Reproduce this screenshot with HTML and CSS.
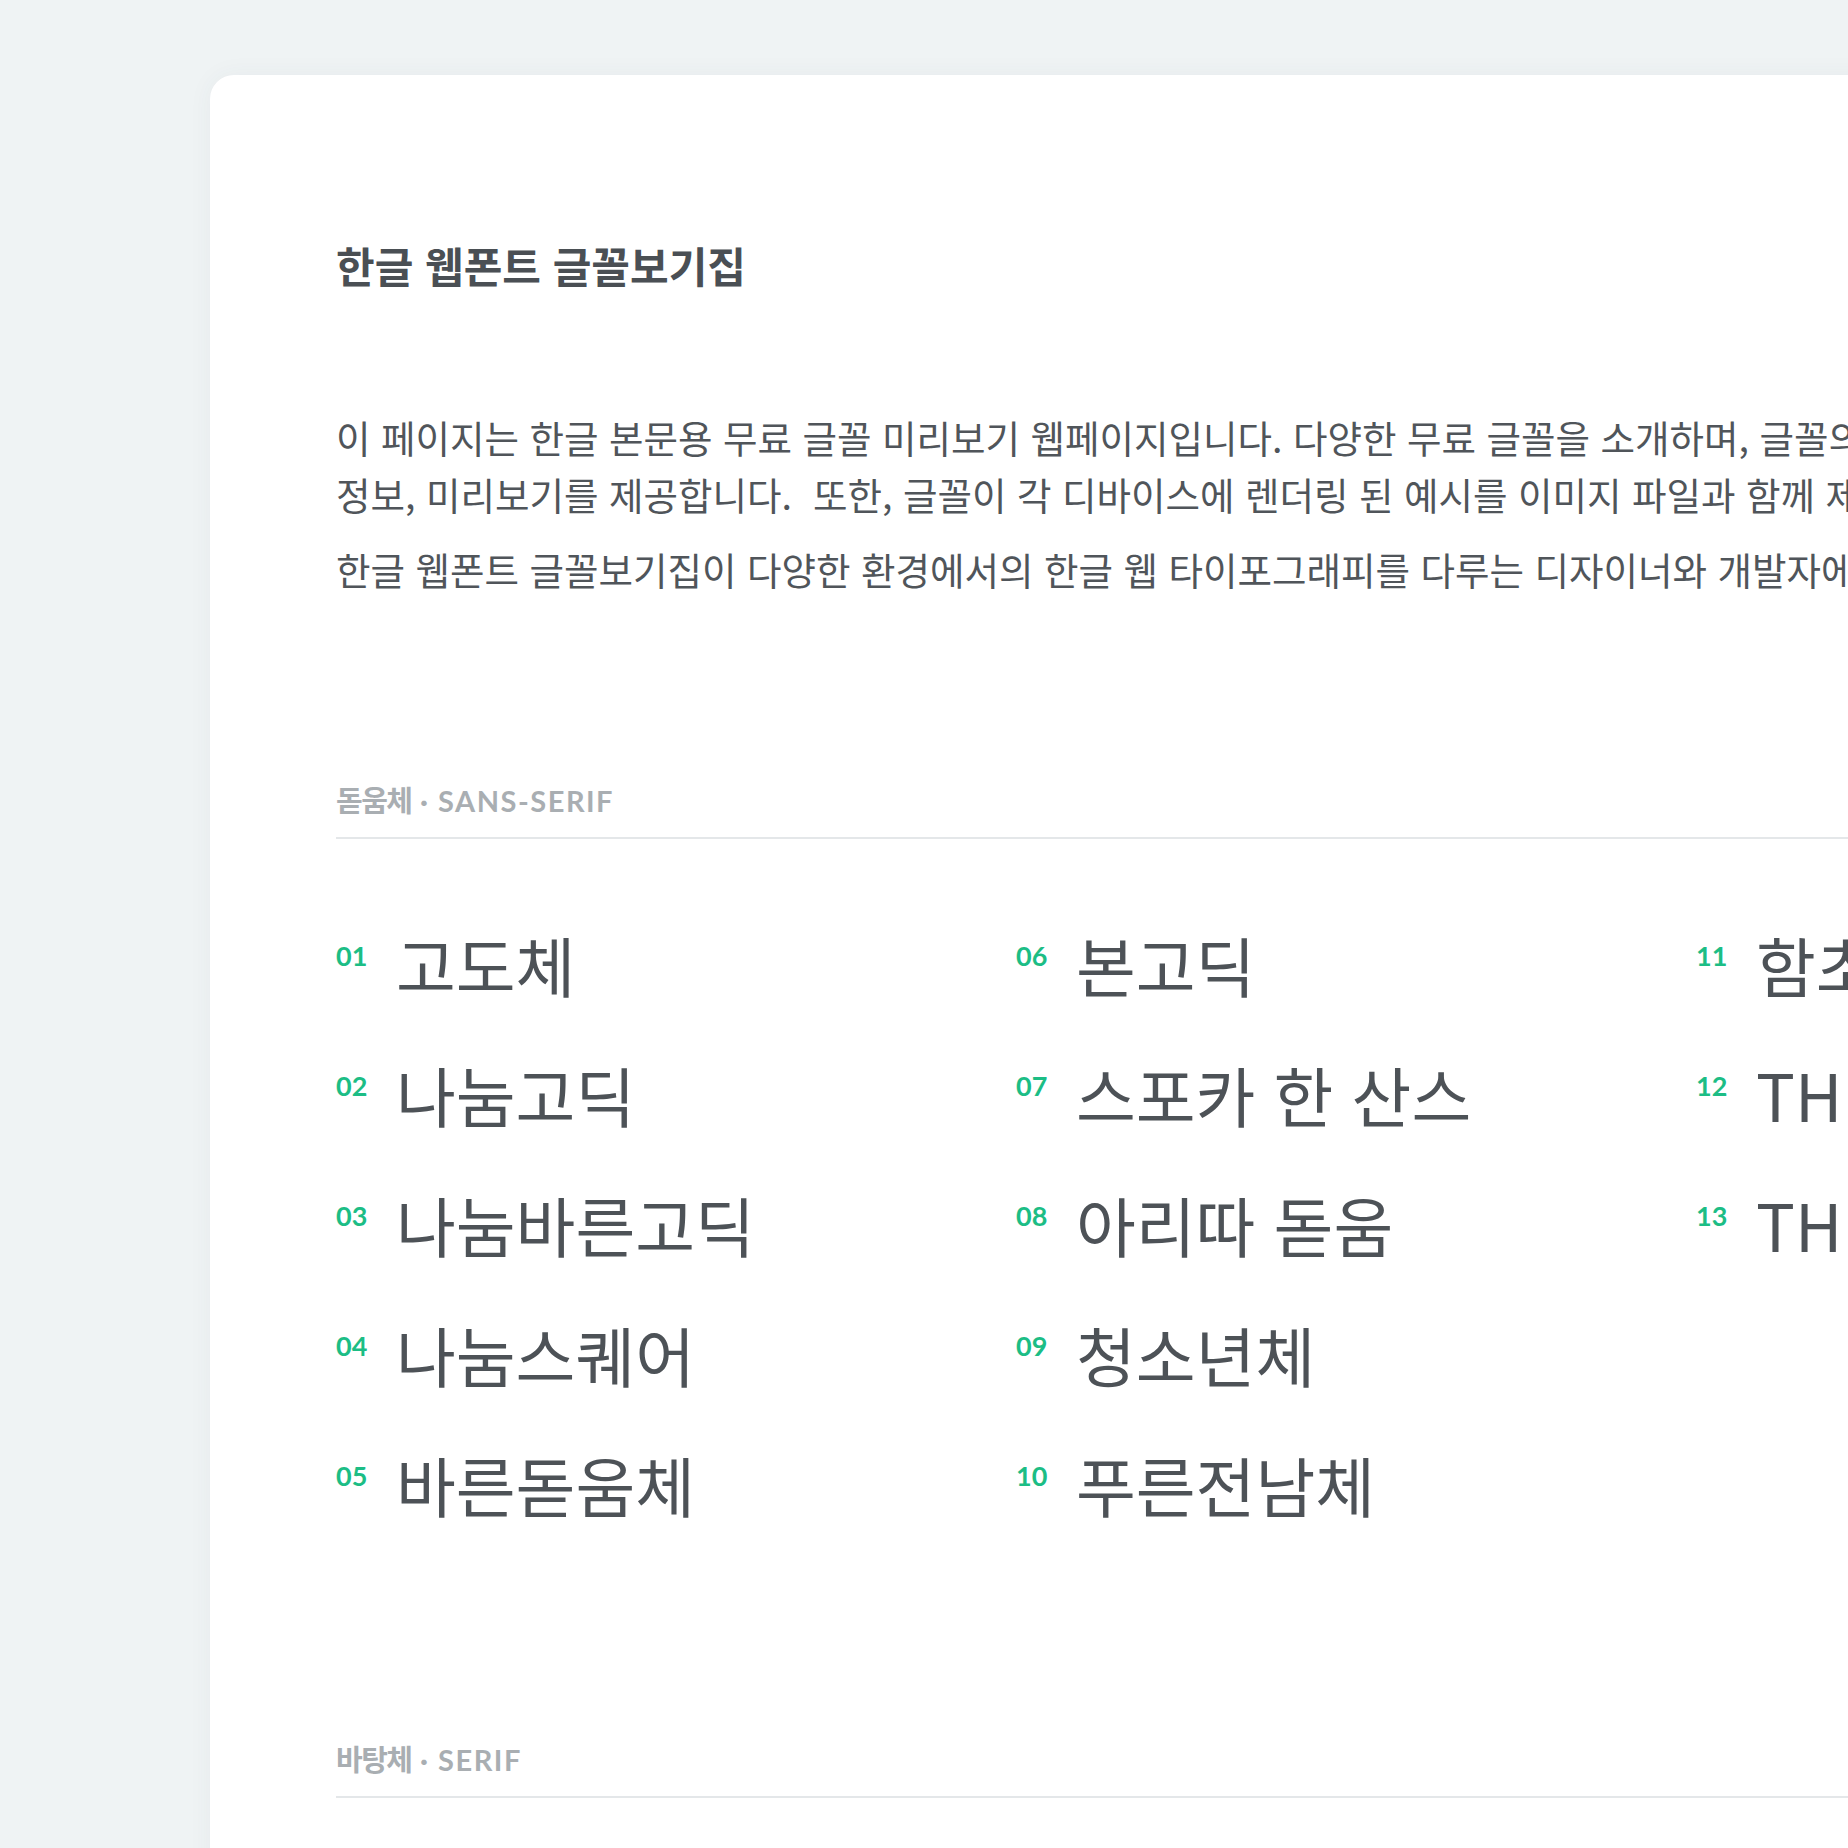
FILE: index.html
```html
<!DOCTYPE html>
<html lang="ko">
<head>
<meta charset="utf-8">
<title>한글 웹폰트 글꼴보기집</title>
<link rel="stylesheet" href="styles.css">
</head>
<body>
<main class="card">
  <h1 class="title">한글 웹폰트 글꼴보기집</h1>
  <div class="intro">
    <p class="para">이 페이지는 한글 본문용 무료 글꼴 미리보기 웹페이지입니다. 다양한 무료 글꼴을 소개하며, 글꼴의 라이선스와 기본<br>정보, 미리보기를 제공합니다.&nbsp; 또한, 글꼴이 각 디바이스에 렌더링 된 예시를 이미지 파일과 함께 제공합니다.</p>
    <p class="para">한글 웹폰트 글꼴보기집이 다양한 환경에서의 한글 웹 타이포그래피를 다루는 디자이너와 개발자에게 도움이 되기를 바랍니다.</p>
  </div>

  <section class="section">
    <h2 class="label"><span class="label-ko">돋움체</span> · SANS-SERIF</h2>
    <ol class="fonts">
      <li class="font"><span class="num">01</span><span class="name">고도체</span></li>
      <li class="font"><span class="num">02</span><span class="name">나눔고딕</span></li>
      <li class="font"><span class="num">03</span><span class="name">나눔바른고딕</span></li>
      <li class="font"><span class="num">04</span><span class="name">나눔스퀘어</span></li>
      <li class="font"><span class="num">05</span><span class="name">바른돋움체</span></li>
      <li class="font"><span class="num">06</span><span class="name">본고딕</span></li>
      <li class="font"><span class="num">07</span><span class="name">스포카 한 산스</span></li>
      <li class="font"><span class="num">08</span><span class="name">아리따 돋움</span></li>
      <li class="font"><span class="num">09</span><span class="name">청소년체</span></li>
      <li class="font"><span class="num">10</span><span class="name">푸른전남체</span></li>
      <li class="font"><span class="num">11</span><span class="name">함초롬돋움</span></li>
      <li class="font"><span class="num">12</span><span class="name">TH 고딕</span></li>
      <li class="font"><span class="num">13</span><span class="name">TH 돋움</span></li>
    </ol>
  </section>

  <section class="section">
    <h2 class="label"><span class="label-ko">바탕체</span> · SERIF</h2>
  </section>
</main>
</body>
</html>
```

FILE: styles.css
```css
html, body {
  margin: 0;
  padding: 0;
  overflow: hidden;
  background: #eff3f4;
}

body {
  width: 1848px;
  height: 1848px;
  font-family: "Noto Sans CJK KR", sans-serif;
  color: #4d5257;
}

.card {
  margin: 75px 0 0 210px;
  width: 2600px;
  min-height: 2200px;
  box-sizing: border-box;
  padding: 160px 0 0 126px;
  background: #ffffff;
  border-radius: 24px;
  box-shadow: 0 0 24px rgba(60, 80, 90, 0.05);
}

.title {
  margin: 0;
  font-size: 42px;
  line-height: 59px;
  font-weight: 700;
  color: #4a4f54;
}

.intro {
  margin-top: 114px;
}

.para {
  margin: 0 0 18px;
  font-size: 37.5px;
  line-height: 57px;
  white-space: nowrap;
  color: #50555a;
}

.section {
  margin-top: 184px;
}

.section + .section {
  margin-top: 191px;
}

.label {
  margin: 0;
  padding-bottom: 16px;
  border-bottom: 2px solid #e4e7e9;
  font-family: "Lato", "Noto Sans CJK KR", sans-serif;
  font-size: 29px;
  line-height: 40px;
  font-weight: 700;
  letter-spacing: 1.5px;
  color: #a9aeb2;
}

.label-ko {
  letter-spacing: -1.5px;
}

.fonts {
  list-style: none;
  margin: 60px 0 0;
  padding: 0;
  display: grid;
  grid-auto-flow: column;
  grid-template-rows: repeat(5, 130px);
  grid-template-columns: repeat(3, 680px);
}

.font {
  display: flex;
  align-items: flex-start;
}

.num {
  width: 60px;
  flex: none;
  padding-top: 44px;
  font-family: "Lato", sans-serif;
  font-size: 27px;
  line-height: 25px;
  font-weight: 700;
  color: #1cbd85;
}

.name {
  font-size: 65px;
  line-height: 130px;
  white-space: nowrap;
  color: #4d5257;
}
```
